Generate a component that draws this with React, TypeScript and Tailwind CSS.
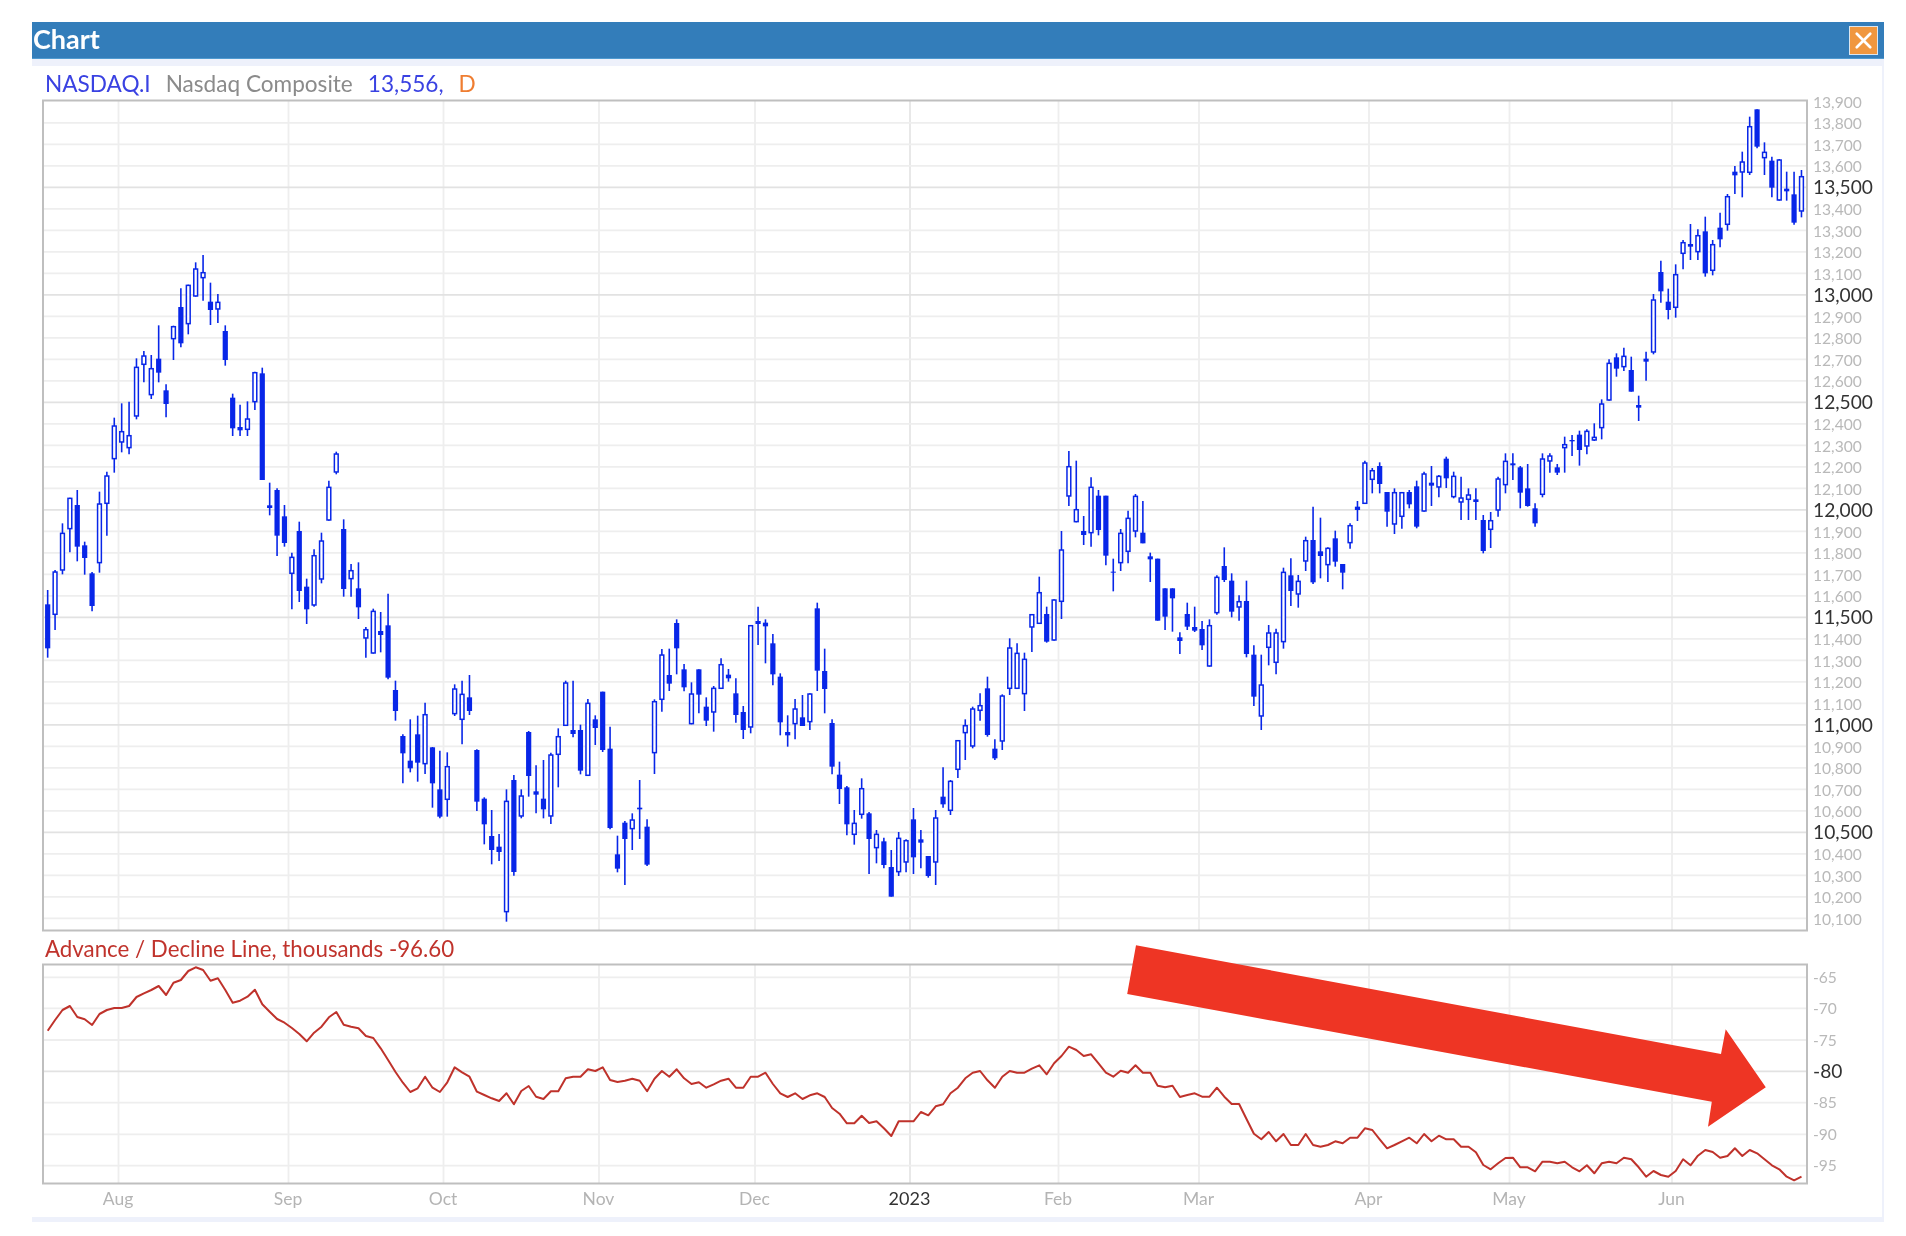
import React from 'react';
import { X } from 'lucide-react';

type Row = [number, number, number, number, number];

// wick top, body top, body bottom, wick bottom, filled
const seg = (base: number, rows: Row[]) =>
  rows.map(([wt, bt, bb, wb, f]) => ({
    wt: base + wt / 3,
    bt: base + bt / 3,
    bb: base + bb / 3,
    wb: base + wb / 3,
    f: f === 1,
  }));

const candles = [
  ...seg(420, [
    [510, 553, 685, 713, 1], [450, 454, 585, 630, 0], [310, 338, 452, 463, 0], [233, 233, 328, 397, 0],
    [210, 255, 380, 424, 1], [365, 376, 414, 464, 1], [456, 460, 558, 574, 1], [215, 250, 430, 458, 0],
    [155, 166, 252, 347, 0], [-7, 16, 118, 158, 0], [-50, 33, 68, 97, 0], [-55, 45, 85, 103, 0],
  ]),
  ...seg(240, [
    [355, 380, 530, 538, 0], [333, 346, 375, 427, 0], [345, 384, 466, 477, 0], [256, 356, 398, 427, 1],
    [433, 451, 492, 532, 1], [257, 258, 298, 360, 0], [145, 201, 310, 322, 1], [134, 134, 253, 283, 0],
    [67, 85, 170, 170, 0], [45, 96, 115, 182, 0], [128, 185, 210, 255, 1], [162, 185, 209, 249, 0],
    [256, 273, 360, 377, 1], [461, 473, 565, 588, 1], [494, 561, 571, 588, 1], [484, 535, 570, 588, 0],
    [395, 396, 487, 510, 0], [383, 400, 720, 720, 1],
  ]),
  ...seg(420, [
    [188, 256, 264, 286, 1], [205, 210, 347, 408, 1], [255, 289, 369, 380, 1], [398, 410, 462, 568, 0],
    [305, 333, 513, 546, 1], [476, 500, 568, 612, 1], [388, 405, 557, 560, 0], [338, 361, 479, 490, 0],
    [182, 200, 302, 302, 0], [95, 100, 158, 163, 0], [298, 327, 507, 530, 1], [432, 450, 478, 530, 0],
    [427, 505, 562, 597, 1], [621, 627, 656, 713, 0], [566, 572, 701, 701, 0], [576, 633, 645, 697, 1],
    [521, 616, 773, 778, 1], [782, 810, 873, 902, 1], [943, 948, 1000, 1090, 1], [898, 1022, 1045, 1057, 1],
    [887, 943, 1028, 1085, 1], [848, 882, 1033, 1062, 0], [981, 982, 1090, 1163, 1], [992, 1108, 1190, 1195, 1],
    [997, 1038, 1140, 1190, 0], [793, 805, 883, 888, 0], [782, 821, 900, 973, 0], [765, 832, 873, 885, 1],
    [988, 990, 1145, 1173, 1],
  ]),
  ...seg(560, [
    [712, 716, 793, 853, 1], [750, 828, 870, 913, 1], [822, 860, 876, 903, 1], [688, 722, 1057, 1085, 0],
    [645, 660, 936, 947, 1], [688, 706, 770, 775, 0], [513, 516, 648, 710, 1], [616, 694, 704, 760, 1],
    [600, 716, 748, 775, 1], [578, 583, 770, 792, 0], [505, 528, 585, 682, 0], [362, 367, 498, 498, 0],
    [362, 510, 522, 532, 1], [494, 510, 632, 643, 1], [417, 428, 648, 648, 0], [466, 478, 504, 555, 1],
    [395, 395, 570, 576, 1], [500, 566, 804, 808, 1], [827, 883, 926, 937, 1], [783, 788, 837, 975, 1],
    [760, 778, 808, 870, 0], [660, 743, 748, 837, 1], [778, 800, 914, 918, 1], [418, 423, 580, 642, 0],
    [267, 283, 420, 455, 0], [266, 345, 371, 393, 1], [178, 189, 265, 343, 1], [312, 328, 382, 394, 1],
    [367, 400, 493, 493, 0], [328, 328, 404, 460, 1], [412, 440, 482, 498, 1], [378, 383, 458, 515, 0],
    [295, 312, 387, 387, 0], [327, 344, 355, 365, 1], [355, 400, 465, 488, 1], [438, 456, 510, 537, 1],
    [195, 195, 503, 520, 0], [140, 183, 192, 255, 1], [178, 188, 199, 310, 1], [222, 250, 343, 376, 1],
    [340, 350, 487, 526, 1], [466, 516, 526, 560, 1], [417, 445, 493, 538, 0], [405, 472, 498, 498, 1],
    [400, 400, 487, 510, 0], [128, 145, 332, 393, 1], [266, 333, 387, 460, 1], [478, 489, 620, 643, 1],
    [605, 644, 687, 732, 1], [678, 682, 793, 826, 1], [750, 788, 825, 854, 0], [655, 684, 765, 776, 0],
    [756, 760, 837, 942, 1], [810, 821, 865, 910, 0], [833, 844, 915, 925, 1], [870, 921, 1010, 1010, 1],
    [816, 833, 937, 948, 0], [838, 840, 908, 937, 0], [744, 778, 892, 942, 1], [810, 838, 848, 925, 1],
    [888, 888, 948, 953, 1], [750, 772, 908, 975, 0], [622, 710, 733, 743, 1], [660, 662, 753, 765, 0],
    [540, 540, 630, 654, 0],
  ]),
  ...seg(420, [
    [898, 915, 940, 1020, 0], [860, 865, 980, 985, 0], [820, 855, 873, 902, 0], [770, 805, 945, 950, 1],
    [958, 986, 1015, 1020, 1], [823, 826, 965, 990, 0], [655, 682, 807, 825, 0], [670, 698, 807, 807, 0],
    [698, 716, 823, 873, 0], [582, 582, 623, 696, 0], [470, 516, 612, 612, 0], [560, 582, 665, 668, 1],
    [538, 538, 662, 662, 0], [333, 388, 546, 597, 0], [93, 138, 230, 258, 0], [122, 267, 307, 307, 0],
    [288, 333, 345, 375, 1], [172, 200, 340, 380, 0], [210, 227, 330, 346, 1], [227, 227, 407, 436, 1],
    [416, 455, 458, 514, 1], [327, 338, 430, 453, 0], [272, 293, 396, 430, 0], [222, 227, 335, 352, 0],
    [243, 338, 370, 370, 1], [398, 409, 418, 486, 1], [416, 416, 602, 602, 1], [505, 505, 590, 630, 1],
    [505, 505, 535, 635, 1], [637, 652, 663, 702, 1], [548, 582, 620, 630, 1], [560, 621, 632, 636, 1],
    [603, 627, 676, 690, 1], [598, 615, 740, 740, 0], [466, 470, 580, 584, 0], [382, 438, 480, 486, 1],
    [460, 482, 575, 592, 1], [526, 543, 563, 602, 0], [482, 543, 702, 712, 1], [676, 704, 830, 858, 1],
    [704, 793, 890, 930, 0], [615, 637, 684, 736, 0], [626, 637, 729, 763, 0], [443, 455, 667, 686, 0],
    [415, 466, 513, 558, 1], [465, 482, 524, 563, 0], [350, 360, 425, 453, 0], [260, 360, 487, 492, 1],
    [293, 394, 408, 475, 1], [382, 383, 436, 486, 0], [332, 355, 425, 440, 1], [432, 432, 458, 508, 1],
    [310, 315, 370, 386, 0], [243, 260, 270, 303, 1], [122, 127, 252, 252, 0], [144, 150, 180, 220, 0],
    [127, 138, 192, 220, 1], [216, 216, 275, 320, 1], [205, 216, 314, 342, 0], [216, 216, 291, 326, 0],
    [210, 216, 253, 265, 1], [182, 199, 320, 325, 1], [155, 160, 275, 275, 0], [138, 188, 197, 258, 1],
    [165, 167, 203, 232, 0], [110, 116, 175, 204, 1], [155, 167, 232, 235, 0],
  ]),
  ...seg(90, [
    [1160, 1222, 1238, 1290, 0], [1195, 1213, 1230, 1290, 0], [1195, 1228, 1236, 1290, 1], [1275, 1290, 1383, 1390, 1],
    [1266, 1290, 1320, 1374, 0], [1160, 1165, 1262, 1280, 0], [1090, 1112, 1186, 1210, 0], [1090, 1120, 1126, 1170, 1],
    [1128, 1132, 1208, 1255, 1], [1122, 1195, 1248, 1250, 1], [1240, 1255, 1300, 1310, 1], [1090, 1105, 1215, 1222, 0],
    [1090, 1096, 1115, 1148, 0], [1122, 1132, 1148, 1155, 1], [1040, 1062, 1075, 1148, 0], [1035, 1050, 1054, 1098, 1],
    [1022, 1034, 1080, 1127, 1], [1018, 1022, 1070, 1093, 0], [1000, 1040, 1052, 1053, 0], [928, 940, 1015, 1048, 0],
    [808, 818, 932, 932, 0], [790, 802, 836, 860, 1], [773, 797, 832, 843, 0], [800, 840, 905, 905, 1],
    [917, 945, 953, 993, 1], [785, 806, 815, 872, 1], [612, 628, 788, 793, 0], [512, 546, 604, 638, 1],
    [596, 635, 660, 688, 1], [523, 552, 654, 683, 0], [450, 456, 492, 538, 0], [402, 462, 470, 510, 1],
    [418, 435, 487, 510, 0], [380, 424, 550, 560, 1], [450, 462, 543, 556, 0], [368, 413, 448, 472, 1],
    [312, 318, 405, 422, 0], [228, 245, 256, 312, 1], [185, 214, 248, 322, 0], [80, 108, 249, 255, 0],
    [58, 58, 170, 175, 1], [157, 185, 205, 255, 0], [200, 212, 293, 322, 1], [207, 208, 332, 332, 0],
    [245, 296, 304, 332, 1], [245, 313, 398, 404, 1], [240, 258, 365, 382, 0],
  ]),
];

const adLine = [
  ...[
    212, 180, 150, 138, 171, 178, 195, 162, 150, 144, 144, 138, 111, 100, 90, 78, 105, 68, 60, 33, 22, 30, 62, 55, 90,
    128, 122, 110, 89, 133, 155, 177, 188, 204, 222, 244, 218, 200, 172, 156, 194, 200, 205, 228, 234, 265, 300, 336,
    368, 396, 385, 350, 383, 396, 367, 322, 337, 350, 395, 405, 415, 423,
  ].map((v) => 960 + v / 3),
  ...[
    250, 283, 243, 228, 260, 267, 244, 244, 205, 200, 200, 178, 183, 172, 210, 216, 212, 206, 212, 244, 206, 183, 200,
    178, 205, 222, 217, 233, 223, 212, 206, 233, 233, 200, 200, 188, 222, 250, 261, 250, 267, 256, 250, 261, 294, 311,
    340, 340, 317, 339, 334, 355, 378, 334, 334, 334, 306, 316, 289, 283, 250, 233, 205, 188, 183, 211, 233, 200, 183,
  ].map((v) => 1010 + v / 3),
  ...[
    128, 128, 116, 106, 133, 100, 78, 50, 60, 78, 73, 100, 128, 140, 122, 128, 106, 128, 128, 167, 172, 167, 201, 195,
    190, 200, 200, 173, 200, 222, 222, 267, 311, 328, 306, 334, 312, 345, 345, 312, 345, 350, 345, 334, 340, 323, 323,
    295, 300, 328, 355, 345, 334, 323, 340, 312, 334, 317, 328, 328, 350, 350, 367, 405, 418, 400, 384,
  ].map((v) => 1030 + v / 3),
  ...[
    773, 802, 802, 814, 785, 785, 790, 785, 802, 814, 796, 820, 790, 785, 790, 773, 778, 802, 830, 813, 825, 830, 813,
    778, 796, 767, 750, 756, 773, 768, 745, 768, 750, 760, 778, 796, 808, 830, 841, 830,
  ].map((v) => 900 + v / 3),
];

const xAt = (i: number) => 47.67 + i * 7.4;

const months = [
  { label: 'Aug', x: 118.5 }, { label: 'Sep', x: 288.5 }, { label: 'Oct', x: 443.5 }, { label: 'Nov', x: 599 },
  { label: 'Dec', x: 755 }, { label: '2023', x: 910 }, { label: 'Feb', x: 1058.5 }, { label: 'Mar', x: 1199 },
  { label: 'Apr', x: 1369 }, { label: 'May', x: 1509.5 }, { label: 'Jun', x: 1672 },
];

const priceLevels = Array.from({ length: 39 }, (_, i) => 13900 - i * 100);
const priceY = (p: number) => 187.3 + (13500 - p) * 0.215;
const adLevels = [
  { v: -65, y: 977.3 }, { v: -70, y: 1008.3 }, { v: -75, y: 1040 }, { v: -80, y: 1071.3 },
  { v: -85, y: 1102.7 }, { v: -90, y: 1134.3 }, { v: -95, y: 1165.7 },
];

const VerticalGrid = ({ top, bottom }: { top: number; bottom: number }) => (
  <>
    {months.map((m) => (
      <line
        key={m.label}
        x1={m.x}
        x2={m.x}
        y1={top}
        y2={bottom}
        strokeWidth={1.8}
        className={m.label === '2023' ? 'stroke-[#e6e6e6]' : 'stroke-[#eeeeee]'}
      />
    ))}
  </>
);

export default function App() {
  return (
    <div className="min-h-[1236px] bg-white pt-[22px] pl-[32px] pr-[22px] font-['Lato',sans-serif]">
      <div className="relative w-[1852px]">
        <div className="flex h-[37px] items-center justify-between border-b border-[#4f9ad0] bg-[#337dba] pl-[1px] pr-[6px]">
          <h1 className="pb-[3px] text-[27px] font-bold leading-none text-white blur-[0.5px]">Chart</h1>
          <button className="flex h-[29px] w-[29px] items-center justify-center border border-[#dbe6ef] bg-[#f0973f]">
            <X className="h-[27px] w-[27px] text-white" strokeWidth={2.4} />
          </button>
        </div>
        <div className="h-[7px] bg-[#eef1fb]" />

        <div className="border-r-2 border-[#eef1fb]">
          <div className="flex h-[33px] items-center gap-[15px] pl-[13px] pt-[3px] text-[22.6px] leading-none blur-[0.5px]">
            <span className="text-[#3a42e2]">NASDAQ.I</span>
            <span className="text-[#8b8b8b]">Nasdaq Composite</span>
            <span className="text-[#3a42e2]">13,556,</span>
            <span className="text-[#ef7d31]">D</span>
          </div>

          <svg viewBox="32 99 1850 833" className="block h-[833px] w-[1850px] overflow-visible blur-[0.5px]">
            <VerticalGrid top={101} bottom={930} />
            {priceLevels.slice(1).map((p) => (
              <line
                key={p}
                x1={43}
                x2={1806}
                y1={priceY(p)}
                y2={priceY(p)}
                strokeWidth={1.8}
                className={p % 500 === 0 ? 'stroke-[#e2e2e2]' : 'stroke-[#eeeeee]'}
              />
            ))}
            <rect x={43} y={100.5} width={1764} height={830} fill="none" strokeWidth={2} className="stroke-[#bfbfbf]" />
            {candles.map((c, i) => (
              <g key={i}>
                <line x1={xAt(i)} x2={xAt(i)} y1={c.wt} y2={c.wb} strokeWidth={1.6} className="stroke-[#0826e8]" />
                {c.f ? (
                  <rect x={xAt(i) - 2.6} y={c.bt} width={5.2} height={c.bb - c.bt} className="fill-[#0826e8]" />
                ) : (
                  <rect
                    x={xAt(i) - 1.9}
                    y={c.bt + 0.7}
                    width={3.8}
                    height={c.bb - c.bt - 1.4}
                    strokeWidth={1.5}
                    className="fill-white stroke-[#0826e8]"
                  />
                )}
              </g>
            ))}
            {priceLevels.map((p) => (
              <text
                key={p}
                x={1813}
                y={p % 500 === 0 ? priceY(p) - 0.5 : priceY(p) + 0.5}
                dominantBaseline="central"
                className={p % 500 === 0 ? 'fill-[#333333] text-[19.2px]' : 'fill-[#b9b9b9] text-[15.6px]'}
              >
                {p.toLocaleString('en-US')}
              </text>
            ))}
          </svg>

          <div className="flex h-[31px] items-center pl-[13px] pt-[3px] text-[22.3px] leading-none text-[#c0332c] blur-[0.5px]">
            Advance / Decline Line, thousands -96.60
          </div>

          <svg viewBox="32 963 1850 254" className="block h-[254px] w-[1850px] blur-[0.5px]">
            <VerticalGrid top={965} bottom={1184} />
            {adLevels.map((l) => (
              <line
                key={l.v}
                x1={43}
                x2={1806}
                y1={l.y}
                y2={l.y}
                strokeWidth={1.8}
                className={l.v === -80 ? 'stroke-[#e2e2e2]' : 'stroke-[#eeeeee]'}
              />
            ))}
            <rect x={43} y={964.5} width={1764} height={219} fill="none" strokeWidth={2} className="stroke-[#bfbfbf]" />
            <polyline
              points={adLine.map((y, i) => `${xAt(i).toFixed(1)},${y.toFixed(1)}`).join(' ')}
              fill="none"
              strokeWidth={2}
              strokeLinejoin="round"
              className="stroke-[#bf322b]"
            />
            {adLevels.map((l) => (
              <text
                key={l.v}
                x={1813}
                y={l.y - 0.5}
                dominantBaseline="central"
                className={l.v === -80 ? 'fill-[#333333] text-[19.2px]' : 'fill-[#b9b9b9] text-[15.6px]'}
              >
                {l.v}
              </text>
            ))}
            {months.map((m) => (
              <text
                key={m.label}
                x={m.x - 0.5}
                y={1198}
                textAnchor="middle"
                dominantBaseline="central"
                className={m.label === '2023' ? 'fill-[#333333] text-[18px]' : 'fill-[#b4b4b4] text-[17.5px]'}
              >
                {m.label}
              </text>
            ))}
          </svg>
        </div>
        <div className="h-[5px] bg-[#eef1fb]" />

        {/* red arrow pasted over the indicator pane */}
        <svg viewBox="0 0 1852 1200" className="pointer-events-none absolute left-0 top-0 h-[1200px] w-[1852px]">
          <polygon
            points="1104,923.3 1095.2,972 1679.8,1079.7 1676,1104.7 1733.8,1065.3 1693.7,1007.3 1689,1032"
            className="fill-[#ee3524]"
          />
        </svg>
      </div>
    </div>
  );
}
